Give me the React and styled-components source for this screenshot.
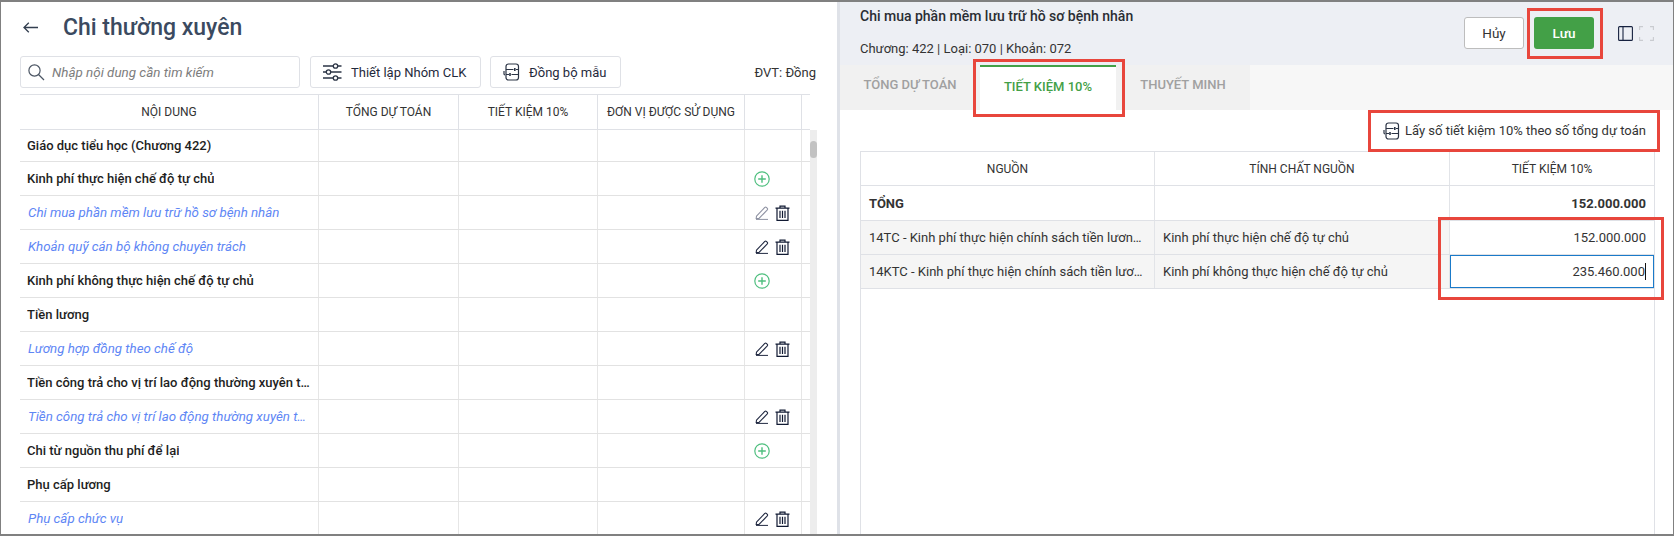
import React from "react";
import styled, { createGlobalStyle } from "styled-components";

const Global = createGlobalStyle`
  html, body { margin: 0; padding: 0; background: #fff; }
  body { font-family: Roboto, "Noto Sans", sans-serif; color: #1f2229; }
  * { box-sizing: border-box; }
`;

const Frame = styled.div`
  position: relative;
  width: 1674px;
  height: 536px;
  display: flex;
  overflow: hidden;
  border: solid #808080;
  border-width: 2px 1px 2px 1px;
`;

const LeftPanel = styled.section`
  width: 836px;
  flex: none;
  display: flex;
  flex-direction: column;
  padding-left: 19px;
`;
const TitleRow = styled.div`
  height: 50px;
  flex: none;
  display: flex;
  align-items: center;
  gap: 25px;
  padding-left: 3px;
`;
const Title = styled.h1`
  margin: 0;
  font-size: 23px;
  font-weight: 500;
  color: #3b4a60;
`;
const Toolbar = styled.div`
  height: 32px;
  flex: none;
  margin-top: 4px;
  display: flex;
  align-items: stretch;
  gap: 9px;
  width: 796px;
`;
const Search = styled.div`
  width: 280px;
  margin-right: 1px;
  border: 1px solid #dfe1e6;
  border-radius: 3px;
  display: flex;
  align-items: center;
  gap: 7px;
  padding-left: 7px;
  font-size: 13.4px;
  font-style: italic;
  color: #7d7d7d;
`;
const ToolButton = styled.div`
  width: ${(p) => p.$w}px;
  border: 1px solid #dfe1e6;
  border-radius: 3px;
  display: flex;
  align-items: center;
  gap: 9px;
  padding-left: ${(p) => p.$pad}px;
  font-size: 13px;
  color: #1f2a3c;
  white-space: nowrap;
`;
const Unit = styled.div`
  margin-left: auto;
  align-self: center;
  font-size: 13px;
  color: #333;
`;
const GridWrap = styled.div`
  display: flex;
  flex: none;
  width: 797px;
  margin-top: 6px;
  flex-direction: column;
`;
const HeadRow = styled.div`
  display: grid;
  flex: none;
  width: 790px;
  grid-template-columns: 299px 140px 139px 147px 57px 8px;
  height: 36px;
  border-top: 1px solid #dfe1e6;
  border-bottom: 1px solid #dfe1e6;
`;
const HeadCell = styled.div`
  display: flex;
  align-items: center;
  justify-content: center;
  font-size: 12px;
  color: #333;
  border-right: 1px solid #dfe1e6;
  white-space: nowrap;
  &:last-child { border-right: 0; }
`;
const BodyArea = styled.div`
  display: flex;
`;
const Rows = styled.div`
  width: 790px;
`;
const Track = styled.div`
  width: 8px;
  background: #ededed;
  padding-top: 11px;
`;
const Thumb = styled.div`
  height: 17px;
  border-radius: 4px;
  background: #c2c2c2;
`;
const Row = styled.div`
  display: grid;
  grid-template-columns: 299px 140px 139px 147px 57px 8px;
  height: ${(p) => (p.$first ? "32px" : "34px")};
  border-bottom: 1px solid #e2e2e2;
`;
const Cell = styled.div`
  display: flex;
  align-items: center;
  border-right: 1px solid #e6e6e6;
`;
const ActionCell = styled(Cell)`
  gap: 6px;
  padding: 1px 0 0 10px;
`;
const NameCell = styled(Cell)`
  padding: ${(p) => (p.$leaf ? "0 7px 0 8px" : "0 7px")};
  padding-bottom: ${(p) => (p.$first ? "1px" : "0")};
  font-size: ${(p) => (p.$leaf ? "13.3px" : "13px")};
  font-weight: ${(p) => (p.$leaf ? 400 : 500)};
  font-style: ${(p) => (p.$leaf ? "italic" : "normal")};
  color: ${(p) => (p.$leaf ? "#5e86f5" : "#1e1e1e")};
  white-space: nowrap;
  overflow: hidden;
`;
const Clip = styled.span`
  overflow: hidden;
  text-overflow: ellipsis;
  white-space: nowrap;
`;

const Divider = styled.div`
  width: 3px;
  flex: none;
  background: #dfe2e8;
`;
const RightPanel = styled.section`
  flex: 1;
  min-width: 0;
  display: flex;
  flex-direction: column;
`;
const DetailHead = styled.div`
  height: 63px;
  flex: none;
  background: #edeff4;
  display: flex;
  padding: 0 19px 0 20px;
`;
const DetailText = styled.div`
  flex: 1;
  padding-top: 5px;
`;
const DetailTitle = styled.div`
  font-size: 14px;
  font-weight: 500;
  color: #2a2d33;
  height: 18px;
  line-height: 18px;
`;
const DetailMeta = styled.div`
  margin-top: 16px;
  font-size: 13px;
  line-height: 16px;
  color: #333;
`;
const Actions = styled.div`
  display: flex;
  align-items: flex-start;
  padding-top: 15px;
`;
const Btn = styled.div`
  width: 60px;
  height: 32px;
  border-radius: 3px;
  display: flex;
  align-items: center;
  justify-content: center;
  font-size: 13.5px;
  font-weight: ${(p) => (p.$primary ? 500 : 400)};
  margin-right: ${(p) => (p.$primary ? "24px" : "10px")};
  background: ${(p) => (p.$primary ? "#43a047" : "#fff")};
  color: ${(p) => (p.$primary ? "#fff" : "#333")};
  border: ${(p) => (p.$primary ? "0" : "1px solid #bdbdbd")};
`;
const WindowIcons = styled.div`
  display: flex;
  gap: 6px;
  padding-top: 9px;
`;
const TabBar = styled.div`
  height: 45px;
  flex: none;
  background: #f7f7f7;
  display: flex;
`;
const TabGroup = styled.div`
  width: 410px;
  background: #f1f1f1;
  display: flex;
`;
const Tab = styled.div`
  width: ${(p) => p.$w}px;
  display: flex;
  align-items: center;
  justify-content: center;
  font-size: 13px;
  font-weight: 500;
  padding-bottom: ${(p) => (p.$active ? "4px" : "6px")};
  color: ${(p) => (p.$active ? "#43a047" : "#a0a0a0")};
  background: ${(p) => (p.$active ? "#fff" : "transparent")};
  border-top: ${(p) => (p.$active ? "2px solid #43a047" : "0")};
`;
const Body = styled.div`
  flex: 1;
  padding: 0 18px 0 20px;
  display: flex;
  flex-direction: column;
`;
const LinkRow = styled.div`
  height: 41px;
  flex: none;
  display: flex;
  align-items: center;
  justify-content: flex-end;
  gap: 5px;
  font-size: 13px;
  color: #333;
  padding-right: 9px;
`;
const DetailTable = styled.div`
  flex: 1;
  border: solid #dfe1e6;
  border-width: 1px 1px 0 1px;
`;
const DRow = styled.div`
  display: grid;
  grid-template-columns: 294px 295px 1fr;
  height: ${(p) => p.$h || 34}px;
  border-bottom: 1px solid #dfe1e6;
`;
const DCell = styled.div`
  display: flex;
  align-items: center;
  padding: 0 8px;
  min-width: 0;
  font-size: 13px;
  font-weight: ${(p) => (p.$bold ? 700 : 400)};
  justify-content: ${(p) => (p.$right ? "flex-end" : "flex-start")};
  background: ${(p) => (p.$muted ? "#f5f5f5" : "#fff")};
  color: #333;
  white-space: nowrap;
  border-right: 1px solid #e2e4e8;
  &:last-child { border-right: 0; }
`;
const HeadDCell = styled(DCell)`
  justify-content: center;
  font-size: 12px;
`;
const InputCell = styled(DCell)`
  border: 1px solid #1a7ac9;
  &:last-child { border: 1px solid #1a7ac9; }
`;
const Caret = styled.span`
  width: 1px;
  height: 17px;
  background: #111;
  margin-right: -1px;
`;
const Mark = styled.div`
  position: absolute;
  left: ${(p) => p.$x}px;
  top: ${(p) => p.$y}px;
  width: ${(p) => p.$w}px;
  height: ${(p) => p.$h}px;
  border: 3px solid #e8463c;
  pointer-events: none;
`;

const Back = () => (
  <svg width="15" height="11" viewBox="0 0 15 11" fill="none" stroke="#333f50" strokeWidth="1.3">
    <path d="M15 5.5H1M5.8.7 1 5.5l4.8 4.8" />
  </svg>
);
const SearchIcon = () => (
  <svg width="17" height="17" viewBox="0 0 17 17" fill="none" stroke="#4b5563" strokeWidth="1.2">
    <circle cx="6.5" cy="6.5" r="5.6" />
    <path d="M10.5 10.5l5.5 5.5" />
  </svg>
);
const Sliders = () => (
  <svg width="20" height="18" viewBox="0 0 20 18" fill="none" stroke="#2b3445" strokeWidth="1.3">
    <path d="M1 3h10M16 3h3.5M1 9h3M9 9h10.5M1 15h10M16 15h3.5" />
    <circle cx="13.5" cy="3" r="2.2" />
    <circle cx="6.5" cy="9" r="2.2" />
    <circle cx="13.5" cy="15" r="2.2" />
  </svg>
);
const SyncIcon = () => (
  <svg width="17" height="18" viewBox="0 0 17 18" fill="none" stroke="#2b3445" strokeWidth="1.2" style={{ flex: "none" }}>
    <rect x="3" y="1" width="12.5" height="16" rx="2.5" />
    <path d="M3 6.5h7.5M13 6.5h2.5M8.5 11.5h7M3 11.5h3" />
    <path d="M1 8v3c0 .4.4.8 1 .8" />
    <path d="M11.8 5v3M7 10v3" strokeWidth="1.6" />
  </svg>
);
const Plus = () => (
  <svg width="16" height="16" viewBox="0 0 16 16" fill="none" stroke="#4fbf7f" strokeWidth="1.2" style={{ marginLeft: -1 }}>
    <circle cx="8" cy="8" r="7.2" />
    <path d="M8 4.2v7.6M4.2 8h7.6" strokeWidth="1.4" />
  </svg>
);
const Pen = ({ $light }) => (
  <svg width="14" height="14" viewBox="0 0 14 14" fill="none" stroke={$light ? "#8f93a3" : "#222a42"} strokeWidth="1.1">
    <path d="M1.5 10.2 9.8 1.4c.5-.4 1.1-.4 1.6 0l.9.9c.4.5.4 1.1 0 1.5L4 12.5H1.2z" />
    <path d="M1 13.4h12" strokeWidth="1" />
  </svg>
);
const Trash = () => (
  <svg width="15" height="16" viewBox="0 0 15 16" fill="none" stroke="#111a33" strokeWidth="1.2">
    <path d="M.5 3.2h14M5 3V1.2h5V3M2 3.2V15.3h11V3.2" />
    <path d="M5 5.8v7.2M7.5 5.8v7.2M10 5.8v7.2" strokeWidth="1.2" />
  </svg>
);
const PanelIcon = () => (
  <svg width="15" height="15" viewBox="0 0 15 15" fill="none" stroke="#16213f" strokeWidth="1.1">
    <rect x="0.6" y="0.6" width="13.8" height="13.8" rx="1" />
    <path d="M5 .6v13.8" />
  </svg>
);
const ExpandIcon = () => (
  <svg width="15" height="15" viewBox="0 0 15 15" fill="none" stroke="#c9cbd0" strokeWidth="1.1">
    <path d="M.6 4V.6H4M11 .6h3.4V4M14.4 11v3.4H11M4 14.4H.6V11" />
  </svg>
);

const cols = ["TỔNG DỰ TOÁN", "TIẾT KIỆM 10%", "ĐƠN VỊ ĐƯỢC SỬ DỤNG"];
const rows = [
  { name: "Giáo dục tiểu học (Chương 422)", first: true },
  { name: "Kinh phí thực hiện chế độ tự chủ", act: "plus" },
  { name: "Chi mua phần mềm lưu trữ hồ sơ bệnh nhân", leaf: true, act: "edit", light: true },
  { name: "Khoản quỹ cán bộ không chuyên trách", leaf: true, act: "edit" },
  { name: "Kinh phí không thực hiện chế độ tự chủ", act: "plus" },
  { name: "Tiền lương" },
  { name: "Lương hợp đồng theo chế độ", leaf: true, act: "edit" },
  { name: "Tiền công trả cho vị trí lao động thường xuyên theo hợp đồng" },
  { name: "Tiền công trả cho vị trí lao động thường xuyên theo hợp đồng", leaf: true, act: "edit" },
  { name: "Chi từ nguồn thu phí để lại", act: "plus" },
  { name: "Phụ cấp lương" },
  { name: "Phụ cấp chức vụ", leaf: true, act: "edit" },
];

export default function App() {
  return (
    <>
      <Global />
      <Frame>
        <LeftPanel>
          <TitleRow>
            <Back />
            <Title>Chi thường xuyên</Title>
          </TitleRow>
          <Toolbar>
            <Search>
              <SearchIcon />
              Nhập nội dung cần tìm kiếm
            </Search>
            <ToolButton $w={171} $pad={11}>
              <Sliders />
              Thiết lập Nhóm CLK
            </ToolButton>
            <ToolButton $w={131} $pad={12}>
              <SyncIcon />
              Đồng bộ mẫu
            </ToolButton>
            <Unit>ĐVT: Đồng</Unit>
          </Toolbar>
          <GridWrap>
            <HeadRow>
              <HeadCell>NỘI DUNG</HeadCell>
              {cols.map((c) => (
                <HeadCell key={c}>{c}</HeadCell>
              ))}
              <HeadCell />
              <HeadCell />
            </HeadRow>
            <BodyArea>
              <Rows>
                {rows.map((r, i) => (
                  <Row key={i} $first={r.first}>
                    <NameCell $leaf={r.leaf} $first={r.first}>
                      <Clip>{r.name}</Clip>
                    </NameCell>
                    <Cell />
                    <Cell />
                    <Cell />
                    <ActionCell>
                      {r.act === "plus" && <Plus />}
                      {r.act === "edit" && (
                        <>
                          <Pen $light={r.light} />
                          <Trash />
                        </>
                      )}
                    </ActionCell>
                  </Row>
                ))}
              </Rows>
              <Track>
                <Thumb />
              </Track>
            </BodyArea>
          </GridWrap>
        </LeftPanel>
        <Divider />
        <RightPanel>
          <DetailHead>
            <DetailText>
              <DetailTitle>Chi mua phần mềm lưu trữ hồ sơ bệnh nhân</DetailTitle>
              <DetailMeta>Chương: 422 | Loại: 070 | Khoản: 072</DetailMeta>
            </DetailText>
            <Actions>
              <Btn>Hủy</Btn>
              <Btn $primary>Lưu</Btn>
              <WindowIcons>
                <PanelIcon />
                <ExpandIcon />
              </WindowIcons>
            </Actions>
          </DetailHead>
          <TabBar>
            <TabGroup>
              <Tab $w={140}>TỔNG DỰ TOÁN</Tab>
              <Tab $w={136} $active>TIẾT KIỆM 10%</Tab>
              <Tab $w={134}>THUYẾT MINH</Tab>
            </TabGroup>
          </TabBar>
          <Body>
            <LinkRow>
              <SyncIcon />
              Lấy số tiết kiệm 10% theo số tổng dự toán
            </LinkRow>
            <DetailTable>
              <DRow $h={34}>
                <HeadDCell>NGUỒN</HeadDCell>
                <HeadDCell>TÍNH CHẤT NGUỒN</HeadDCell>
                <HeadDCell>TIẾT KIỆM 10%</HeadDCell>
              </DRow>
              <DRow $h={35}>
                <DCell $bold>TỔNG</DCell>
                <DCell />
                <DCell $right $bold>152.000.000</DCell>
              </DRow>
              <DRow>
                <DCell $muted><Clip>14TC - Kinh phí thực hiện chính sách tiền lương theo quy định</Clip></DCell>
                <DCell $muted>Kinh phí thực hiện chế độ tự chủ</DCell>
                <DCell $right>152.000.000</DCell>
              </DRow>
              <DRow>
                <DCell $muted><Clip>14KTC - Kinh phí thực hiện chính sách tiền lương theo quy định</Clip></DCell>
                <DCell $muted>Kinh phí không thực hiện chế độ tự chủ</DCell>
                <InputCell $right>235.460.000<Caret /></InputCell>
              </DRow>
            </DetailTable>
          </Body>
        </RightPanel>
        <Mark $x={1526} $y={6} $w={76} $h={51} />
        <Mark $x={972} $y={57} $w={152} $h={58} />
        <Mark $x={1367} $y={108} $w={292} $h={42} />
        <Mark $x={1437} $y={215} $w={226} $h={83} />
      </Frame>
    </>
  );
}
